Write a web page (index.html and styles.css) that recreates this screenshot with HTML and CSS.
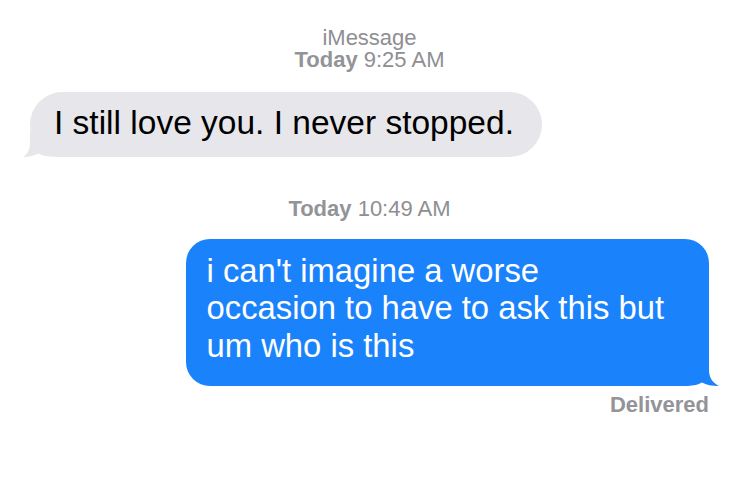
FILE: index.html
```html
<!DOCTYPE html>
<html>
<head>
<meta charset="utf-8">
<link rel="stylesheet" href="styles.css">
</head>
<body>
<main class="thread">
  <div class="meta meta-top">
    <div class="service">iMessage</div>
    <div><span class="day">Today</span> 9:25 AM</div>
  </div>
  <div class="row row-in">
    <div class="bubble bubble-in">I still love you. I never stopped.
      <svg class="tail tail-in" width="42" height="26" viewBox="0 0 42 26"><path d="M7 0 L7 12 C7 19 4 23.5 0 26 C6 26 11 24.8 15 22.5 C19 25 25 26 42 26 L42 0 Z" fill="#e6e6eb"/></svg>
    </div>
  </div>
  <div class="meta meta-mid"><span class="day">Today</span> 10:49 AM</div>
  <div class="row row-out">
    <div class="bubble bubble-out">i can't imagine a worse occasion to have to ask this but um who is this
      <svg class="tail tail-out" width="40" height="26" viewBox="0 0 40 26"><path d="M30 0 L30 10 C30 18 34 23 40 26 C33 26 27 25 23 22.5 C19 25 14 26 0 26 L0 0 Z" fill="#1a82fb"/></svg>
    </div>
  </div>
  <div class="status">Delivered</div>
</main>
</body>
</html>
```
FILE: styles.css
```css
html, body {
  margin: 0;
  padding: 0;
  background: #ffffff;
}
body {
  font-family: "Liberation Sans", Arial, sans-serif;
  width: 741px;
  height: 503px;
  overflow: hidden;
}
.thread {
  display: flex;
  flex-direction: column;
  padding: 27px 32px 0 30px;
}
.meta {
  text-align: center;
  color: #8e8e93;
  font-size: 22px;
  line-height: 22px;
}
.day {
  font-weight: 700;
  color: #939398;
}
.row {
  display: flex;
}
.row-in {
  justify-content: flex-start;
  margin-top: 20.5px;
}
.row-out {
  justify-content: flex-end;
  margin-top: 18.5px;
}
.bubble {
  position: relative;
  z-index: 0;
  box-sizing: border-box;
}
.bubble-in {
  background: #e6e6eb;
  color: #000;
  border-radius: 33px;
  font-size: 33.5px;
  line-height: 37.4px;
  padding: 12.7px 28px 15.9px 24px;
}
.bubble-out {
  background: #1a82fb;
  color: #fff;
  border-radius: 24px;
  max-width: 523px;
  font-size: 32.8px;
  line-height: 37.3px;
  padding: 13.2px 39px 21.8px 20.5px;
}
.tail {
  position: absolute;
  bottom: 0;
  display: block;
  z-index: -1;
}
.tail-in {
  left: -7px;
}
.tail-out {
  right: -10px;
}
.meta-mid {
  margin-top: 41px;
}
.status {
  align-self: flex-end;
  margin-top: 8px;
  color: #939398;
  font-size: 22px;
  font-weight: 700;
  line-height: 22px;
}
```
